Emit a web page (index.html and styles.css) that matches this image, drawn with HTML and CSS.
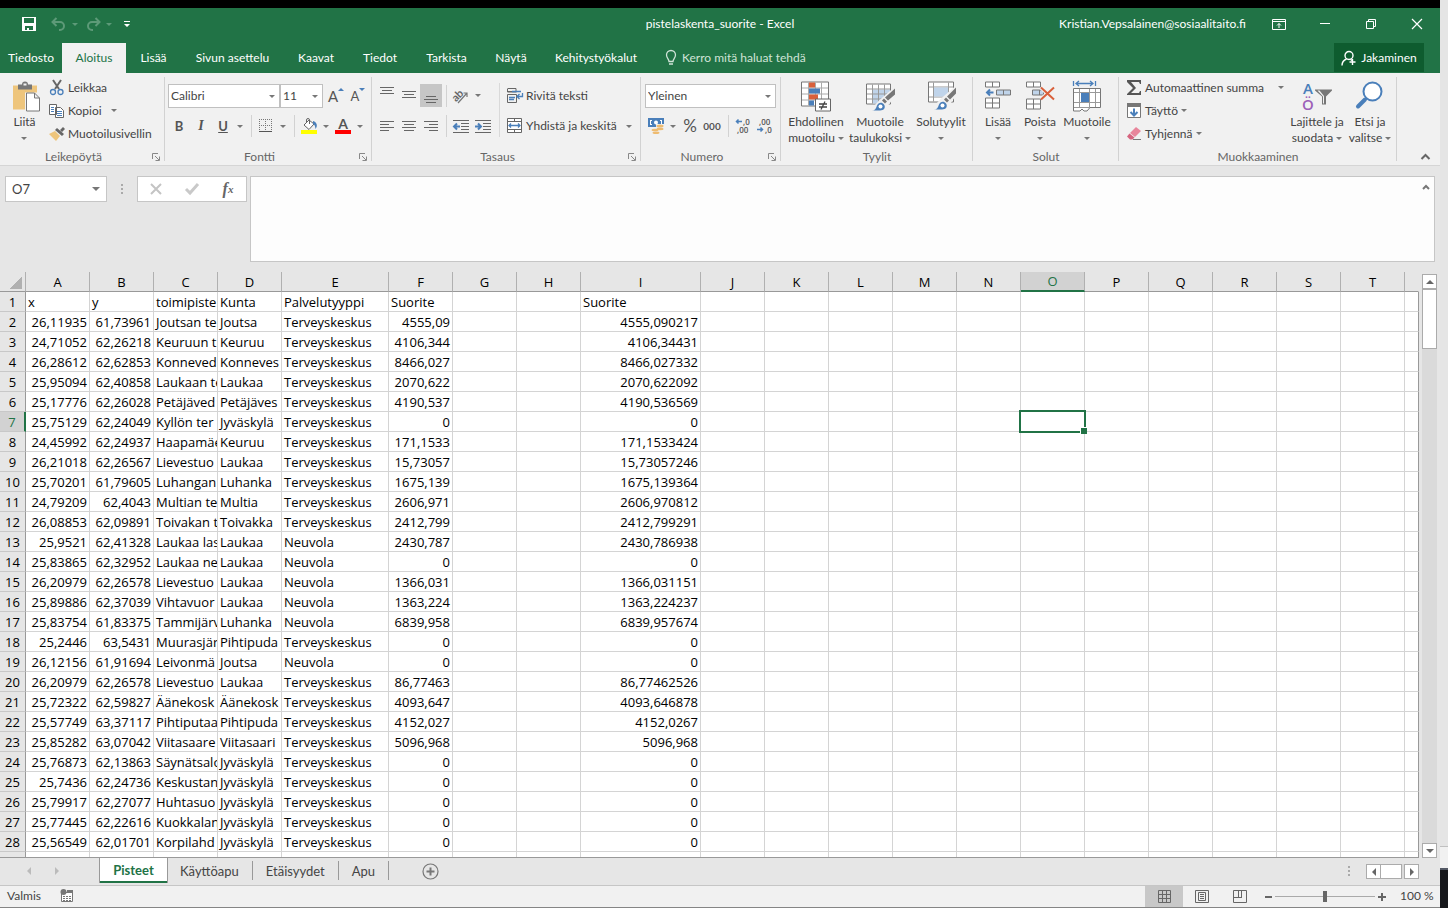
FILE: index.html
```
<!DOCTYPE html>
<html lang="fi">
<head>
<meta charset="utf-8">
<title>pistelaskenta_suorite - Excel</title>
<link rel="stylesheet" href="styles.css">
</head>
<body>
<div class="screen">
<div class="app">
  <header class="titlebar">
    <div class="quick">
      <button class="q-save" aria-label="Tallenna"><svg width="14" height="14" viewBox="0 0 14 14" shape-rendering="crispEdges"><path fill="#fff" fill-rule="evenodd" d="M0 0h14v14H0zM2 1v5h10V1zM3 9v4h2v-2h2v2h4V9z"/></svg></button>
      <button class="q-undo dim" aria-label="Kumoa"><svg width="15" height="14" viewBox="0 0 15 14" fill="none" stroke="#5d9a78" stroke-width="2"><path d="M5.500 1 1.500 5l4 4M2 5h7a4 4 0 0 1 0 8H8"/></svg></button><i class="dd faded"></i>
      <button class="q-redo dim" aria-label="Tee uudelleen"><svg width="15" height="14" viewBox="0 0 15 14" fill="none" stroke="#5d9a78" stroke-width="2"><path d="M9.500 1l4 4-4 4M13 5H6a4 4 0 0 0 0 8h1"/></svg></button><i class="dd faded"></i>
      <button class="q-more" aria-label="Mukauta"><svg width="7" height="7" viewBox="0 0 7 7"><path fill="#fff" d="M0 0h6v1H0zM0 3h6L3 6z"/></svg></button>
    </div>
    <div class="title">pistelaskenta_suorite - Excel</div>
    <div class="account">
      <span class="mail">Kristian.Vepsalainen@sosiaalitaito.fi</span>
      <button class="wbtn" aria-label="Valintanauhan asetukset"><svg width="14" height="11" viewBox="0 0 14 11" fill="none" stroke="#fff"><path d="M.5.5h13v10H.5zM.5 2.500h13M7 9V4.500M5 6.500l2-2 2 2"/></svg></button>
      <button class="wbtn" aria-label="Pienennä"><svg width="10" height="10" viewBox="0 0 10 10" stroke="#fff"><path d="M0 4.500h10"/></svg></button>
      <button class="wbtn" aria-label="Palauta"><svg width="10" height="10" viewBox="0 0 10 10" fill="none" stroke="#fff"><path d="M.5 2.500h7v7h-7zM2.500 2.500v-2h7v7h-2"/></svg></button>
      <button class="wbtn" aria-label="Sulje"><svg width="10" height="10" viewBox="0 0 10 10" stroke="#fff" stroke-width="1.200"><path d="M0 0l10 10M10 0 0 10"/></svg></button>
    </div>
  </header>
  <nav class="tabs">
    <button>Tiedosto</button><button class="on">Aloitus</button><button>Lisää</button><button>Sivun asettelu</button><button>Kaavat</button><button>Tiedot</button><button>Tarkista</button><button>Näytä</button><button>Kehitystyökalut</button>
    <button class="tell"><svg width="12" height="16" viewBox="0 0 12 16" fill="none" stroke="#cfe3d7" stroke-width="1.300"><path d="M4 11.500C4 9 1.500 8 1.500 5a4.500 4.500 0 0 1 9 0c0 3-2.500 4-2.500 6.500zM4 14h4"/></svg>Kerro mitä haluat tehdä</button>
    <button class="share"><svg width="16" height="16" viewBox="0 0 16 16" fill="none" stroke="#fff" stroke-width="1.400"><circle cx="8" cy="5.500" r="4"/><path d="M1 15.500c0-3 2-5.500 4.500-6.500M9.500 9.500l1.500 1M11.500 9v6M8.500 12h6"/></svg>Jakaminen</button>
  </nav>

  <section class="ribbon">
    <div class="group g-clip">
      <div class="body">
        <button class="big"><svg width="30" height="30" viewBox="0 0 30 30"><path fill="#eec57c" d="M3 4h24v24H3z"/><path fill="#777" d="M8 3h4a3 3 0 0 1 6 0h4v5H8z"/><path fill="#f1f1f1" d="M13.500 2h3v2h-3zM15 11h15v19H15z"/><path fill="#fff" stroke="#777" d="M16.500 11.500h8l5 5v13h-13zM24.500 11.500v5h5"/></svg><span>Liitä<br><i class="dd"></i></span></button>
        <div class="list">
          <button><svg width="16" height="16" viewBox="0 0 16 16" fill="none"><path stroke="#666" stroke-width="2" d="M4 0l6 9M12 0 6 9"/><circle cx="4" cy="12" r="2.500" stroke="#4a7fba" stroke-width="1.300"/><circle cx="11.500" cy="12" r="2.500" stroke="#4a7fba" stroke-width="1.300"/></svg>Leikkaa</button>
          <button><svg width="16" height="16" viewBox="0 0 16 16" fill="#fff" stroke="#666"><path d="M.5 1.500h7v10h-7zM6.500 4.500h5l3 3v7h-8z"/><path stroke="#4a7fba" d="M2 4.500h3M2 6.500h3M2 8.500h3M8 8.500h5M8 10.500h5M8 12.500h5"/></svg>Kopioi<i class="dd far"></i></button>
          <button><svg width="16" height="16" viewBox="0 0 16 16"><path fill="#eec57c" d="M0 8l6-3 5 5-4 5z"/><path fill="#666" d="M6 4l2-2 7 6-2 2zM11 4l3-3 2 2-3 3z"/></svg>Muotoilusivellin</button>
        </div>
      </div>
      <div class="cap"><span>Leikepöytä</span><button class="launch" aria-label="Leikepöydän asetukset"><svg width="8" height="8" viewBox="0 0 8 8" fill="none" stroke="#888"><path d="M.5 6V.5H6M3 3l4 4M7.500 3.500v4h-4"/></svg></button></div>
    </div>

    <div class="group g-font">
      <div class="body rows">
        <div class="row">
          <label class="sel w-font"><select aria-label="Fontti"><option>Calibri</option></select></label>
          <label class="sel w-size"><select aria-label="Fonttikoko"><option>11</option></select></label>
          <button class="ic grow" aria-label="Suurenna fonttia"><b>A</b><i class="tri-up"></i></button>
          <button class="ic shrink" aria-label="Pienennä fonttia"><b>A</b><i class="tri-dn"></i></button>
        </div>
        <div class="row">
          <button class="ic bold">B</button><button class="ic ital">I</button><button class="ic undl">U</button><button class="da" aria-label="Alleviivaus"><i class="dd"></i></button>
          <i class="sep"></i>
          <button class="ic" aria-label="Reunat"><svg width="14" height="14" viewBox="0 0 14 14" stroke="#777"><path stroke-dasharray="1 1" d="M0 .5h13M0 6.500h13M.5 0v13M6.500 0v13M12.500 0v13"/><path stroke="#555" d="M0 12.500h13"/></svg></button><button class="da" aria-label="Reunavalikko"><i class="dd"></i></button>
          <i class="sep"></i>
          <button class="ic" aria-label="Täyttöväri"><svg width="16" height="16" viewBox="0 0 16 16"><path fill="#ff0" d="M0 12h16v4H0z"/><path fill="#fff" stroke="#666" d="M3 7l5-5 5 4-5 5.500z"/><path fill="none" stroke="#666" d="M5.500 5V2a1.500 1.500 0 0 1 3 0v4"/><path fill="#4a7fba" d="M12 3c4 1 5 5 2.500 8C14 8 14 7 12 6z"/></svg></button><button class="da" aria-label="Täyttövärivalikko"><i class="dd"></i></button>
          <button class="ic" aria-label="Fontin väri"><svg width="16" height="16" viewBox="0 0 16 16"><path fill="red" d="M0 12h16v4H0z"/><text x="8" y="11" class="t-a">A</text></svg></button><button class="da" aria-label="Fonttivärivalikko"><i class="dd"></i></button>
        </div>
      </div>
      <div class="cap"><span>Fontti</span><button class="launch" aria-label="Fonttiasetukset"><svg width="8" height="8" viewBox="0 0 8 8" fill="none" stroke="#888"><path d="M.5 6V.5H6M3 3l4 4M7.500 3.500v4h-4"/></svg></button></div>
    </div>

    <div class="group g-align">
      <div class="body">
        <div class="rows left">
          <div class="row">
            <button class="ic" aria-label="Tasaa ylös"><svg width="14" height="21" viewBox="0 0 14 21" stroke="#666"><path d="M0 2.500h14M2 5.500h10M0 8.500h14"/></svg></button>
            <button class="ic" aria-label="Keskitä pystysuunnassa"><svg width="14" height="21" viewBox="0 0 14 21" stroke="#666"><path d="M0 6.500h14M2 9.500h10M0 12.500h14"/></svg></button>
            <button class="ic sel-on" aria-label="Tasaa alas"><svg width="14" height="21" viewBox="0 0 14 21" stroke="#666"><path d="M2 11.500h10M0 14.500h14M2 17.500h10"/></svg></button>
            <i class="sep"></i>
            <button class="ic" aria-label="Suunta"><svg width="18" height="18" viewBox="0 0 18 18"><text x="0" y="12" class="t-ab" transform="rotate(-45 6 9)">ab</text><path fill="none" stroke="#777" stroke-width="1.200" d="M6 16 15 6M11.500 6H15v4"/></svg></button><button class="da" aria-label="Suuntavalikko"><i class="dd"></i></button>
          </div>
          <div class="row">
            <button class="ic" aria-label="Tasaa vasemmalle"><svg width="14" height="13" viewBox="0 0 14 13" stroke="#666"><path d="M0 1.500h14M0 4.500h9M0 7.500h14M0 10.500h9"/></svg></button>
            <button class="ic" aria-label="Keskitä"><svg width="14" height="13" viewBox="0 0 14 13" stroke="#666"><path d="M0 1.500h14M2 4.500h10M0 7.500h14M2 10.500h10"/></svg></button>
            <button class="ic" aria-label="Tasaa oikealle"><svg width="14" height="13" viewBox="0 0 14 13" stroke="#666"><path d="M0 1.500h14M5 4.500h9M0 7.500h14M5 10.500h9"/></svg></button>
            <i class="sep"></i>
            <button class="ic" aria-label="Pienennä sisennystä"><svg width="16" height="13" viewBox="0 0 16 13" stroke="#666"><path d="M0 .5h16M8 3.500h8M8 6.500h8M8 9.500h8M0 12.500h16"/><path fill="none" stroke="#4a7fba" stroke-width="2" d="M7 6.500H1.500M4 3.500l-3 3 3 3"/></svg></button>
            <button class="ic" aria-label="Suurenna sisennystä"><svg width="16" height="13" viewBox="0 0 16 13" stroke="#666"><path d="M0 .5h16M8 3.500h8M8 6.500h8M8 9.500h8M0 12.500h16"/><path fill="none" stroke="#4a7fba" stroke-width="2" d="M0 6.500h5.500M3 3.500l3 3-3 3"/></svg></button>
          </div>
        </div>
        <div class="rows right">
          <button class="row txt"><svg width="16" height="16" viewBox="0 0 16 16" fill="none" stroke="#666"><path d="M.5 1v3h9M.5.500H9v3H.500M.500 6.500h9v8h-9z"/><path stroke="#4a7fba" stroke-width="1.300" d="M2 9.500h6M2 11.500h5M5 3.500h9M15.500 5v3.500H10M12.500 6 10 8.500l2.500 2.500"/></svg>Rivitä teksti</button>
          <button class="row txt"><svg width="16" height="16" viewBox="0 0 16 16" fill="none" stroke="#666"><path fill="#fff" d="M.5.500h14v14H.500z"/><path d="M.5 3.500h14M.5 11.500h14M7.500.500v3M7.500 11.500v3"/><path stroke="#4a7fba" stroke-width="1.300" d="M2 7.500h11M4 5.500l-2 2 2 2M11 5.500l2 2-2 2"/></svg>Yhdistä ja keskitä<i class="dd far"></i></button>
        </div>
      </div>
      <div class="cap"><span>Tasaus</span><button class="launch" aria-label="Tasausasetukset"><svg width="8" height="8" viewBox="0 0 8 8" fill="none" stroke="#888"><path d="M.5 6V.5H6M3 3l4 4M7.500 3.500v4h-4"/></svg></button></div>
    </div>

    <div class="group g-num">
      <div class="body rows">
        <div class="row"><label class="sel w-num"><select aria-label="Lukumuoto"><option>Yleinen</option></select></label></div>
        <div class="row">
          <button class="ic" aria-label="Valuutta"><svg width="16" height="16" viewBox="0 0 16 16"><path fill="#4a7fba" d="M0 0h16v9H0z"/><path fill="#fff" d="M2 2h2v1H3v3h1v1H2zM12 2h2v5h-2V6h1V3h-1z"/><circle cx="8" cy="4.500" r="2" fill="#fff"/><path fill="#f1f1f1" d="M3 9h5V6h8v10H3z"/><g fill="#eebb70"><ellipse cx="12" cy="8" rx="3.500" ry="1.500"/><ellipse cx="12" cy="11" rx="3.500" ry="1.200"/><ellipse cx="7" cy="12" rx="3.500" ry="1.200"/><ellipse cx="8" cy="14.800" rx="3.500" ry="1.200"/></g></svg></button><button class="da" aria-label="Valuuttavalikko"><i class="dd"></i></button>
          <button class="ic pct">%</button><button class="ic tho">000</button>
          <i class="sep"></i>
          <button class="ic" aria-label="Lisää desimaaleja"><svg width="16" height="16" viewBox="0 0 16 16"><text x="8" y="7" class="t-d">,0</text><text x="2" y="15" class="t-d">,00</text><path fill="none" stroke="#4a7fba" stroke-width="1.500" d="M7 3.500H1.500M3.500 1.500l-2 2 2 2"/></svg></button>
          <button class="ic" aria-label="Vähennä desimaaleja"><svg width="16" height="16" viewBox="0 0 16 16"><text x="2" y="7" class="t-d">,00</text><text x="8" y="15" class="t-d">,0</text><path fill="none" stroke="#4a7fba" stroke-width="1.500" d="M0 11.500h5.500M3.500 9.500l2 2-2 2"/></svg></button>
        </div>
      </div>
      <div class="cap"><span>Numero</span><button class="launch" aria-label="Numeroasetukset"><svg width="8" height="8" viewBox="0 0 8 8" fill="none" stroke="#888"><path d="M.5 6V.5H6M3 3l4 4M7.500 3.500v4h-4"/></svg></button></div>
    </div>

    <div class="group g-style">
      <div class="body">
        <button class="big"><svg width="30" height="30" viewBox="0 0 30 30"><path fill="#fff" stroke="#777" d="M.5.500h27v24H.500z"/><path stroke="#aaa" d="M7.500 1v23M14.500 1v23M20.500 1v23M1 6.500h26M1 12.500h26M1 18.500h26"/><path fill="#d9603b" d="M8 1h6v5H8zM8 13h9v5H8z"/><path fill="#4a7fba" d="M8 7h11v5H8zM8 19h5v5H8z"/><path fill="#fff" stroke="#666" d="M14.500 17.500h15v12h-15z"/><path stroke="#444" stroke-width="1.300" d="M18 22.500h8M18 25.500h8M24 20l-4 8"/></svg><span>Ehdollinen<br>muotoilu<i class="dd in"></i></span></button>
        <button class="big"><svg width="30" height="30" viewBox="0 0 30 30"><path fill="#fff" stroke="#777" d="M1.500 2.500h24v20h-24z"/><path fill="#c0d4ea" d="M8 8h17v14H8z"/><path stroke="#999" d="M7.500 3v19M13.500 3v19M19.500 3v19M2 7.500h23M2 12.500h23M2 17.500h23"/><path fill="#f1f1f1" d="M30 5v10L20 28H6l8-9z"/><path fill="#777" d="M30 7v6l-7 6-3-3zM19 17l3 3-2 2-3-3z"/><path fill="#4a7fba" d="M7 29c3 0 4-2 5-5 1-3 5-4 7-1s0 6-4 6z"/><circle cx="15.500" cy="25" r="2" fill="#fff"/></svg><span>Muotoile<br>taulukoksi<i class="dd in"></i></span></button>
        <button class="big"><svg width="30" height="30" viewBox="0 0 30 30"><path fill="#fff" stroke="#777" d="M2.500.500h25v20h-25z"/><path stroke="#999" d="M7.500 1v19M22.500 1v19M3 5.500h24M3 15.500h24"/><path fill="#c0d4ea" d="M8 6h14v9H8z"/><path fill="#f1f1f1" d="M30 4v10L21 27H6l8-9z"/><path fill="#777" d="M30 6v6l-6 6-3-3zM20 16l3 3-2 2-3-3z"/><path fill="#4a7fba" d="M8 28c3 0 4-2 5-5 1-3 5-4 7-1s0 6-4 6z"/><circle cx="16.500" cy="24" r="2" fill="#fff"/></svg><span>Solutyylit<br><i class="dd"></i></span></button>
      </div>
      <div class="cap"><span>Tyylit</span></div>
    </div>

    <div class="group g-cells">
      <div class="body">
        <button class="big"><svg width="28" height="30" viewBox="0 0 28 30" fill="#fff" stroke="#777"><path d="M1.500.500h14v5h-14zM8.500.500v5M1.500 16.500h14v10h-14zM8.500 16.500v10M1.500 21.500h14"/><path fill="#c0d4ea" d="M12.500 8.500h14v5h-14zM19.500 8.500v5"/><path fill="none" stroke="#4a7fba" stroke-width="2" d="M9.500 11H3M6 8l-3 3 3 3"/></svg><span>Lisää<br><i class="dd"></i></span></button>
        <button class="big"><svg width="30" height="30" viewBox="0 0 30 30" fill="#fff" stroke="#777"><path d="M1.500.500h14v5h-14zM8.500.500v5M1.500 17.500h14v10h-14zM8.500 17.500v10M1.500 22.500h14"/><path fill="#c0d4ea" d="M7.500 8.500h11v5h-11zM14.500 8.500v5"/><path fill="none" stroke="#f1f1f1" stroke-width="4" d="M16 6l13 12M29 6 16 18"/><path fill="none" stroke="#d9603b" stroke-width="2" d="M16 6l13 12M29 6 16 18"/></svg><span>Poista<br><i class="dd"></i></span></button>
        <button class="big"><svg width="28" height="31" viewBox="0 0 28 31"><path fill="none" stroke="#4a7fba" stroke-width="1.300" d="M.5 0v5M22.500 0v5M3 2.500h17M6 0 3 2.500 6 5M17 0l3 2.500L17 5"/><path fill="#fff" stroke="#777" d="M.5 7.500h27v19H17l-3 3.500h-3l-2-2-2 2H.500z"/><path stroke="#999" d="M6.500 8v18M16.500 8v18M22.500 8v18M1 11.500h26M1 21.500h26M1 26.500h16"/><path fill="#4a7fba" d="M8 12h8v9H8z"/></svg><span>Muotoile<br><i class="dd"></i></span></button>
      </div>
      <div class="cap"><span>Solut</span></div>
    </div>

    <div class="group g-edit">
      <div class="body">
        <div class="list">
          <button><svg width="16" height="16" viewBox="0 0 16 16"><path fill="#555" d="M1 0h14v4h-1l-1-2H5l5 6-5 5h8l1-2h1v4H1v-1l6-6-6-6z"/></svg>Automaattinen summa<i class="dd far"></i></button>
          <button><svg width="16" height="16" viewBox="0 0 16 16"><path fill="#fff" stroke="#777" d="M1.500.500h13v14h-13z"/><path fill="#777" d="M1 0h14v4H1z"/><path fill="none" stroke="#4a7fba" stroke-width="2" d="M8 5.500V12M4.500 9 8 12.500 11.500 9"/></svg>Täyttö<i class="dd in"></i></button>
          <button><svg width="16" height="16" viewBox="0 0 16 16"><path fill="#e8859b" d="M10 1l5 4-6 6-5-4z"/><path fill="#d6647f" d="M3.500 7.500l5 4-2 2H4l-3-3z"/><path stroke="#777" d="M7 13.500h8"/></svg>Tyhjennä<i class="dd in"></i></button>
        </div>
        <button class="big"><svg width="30" height="30" viewBox="0 0 30 30"><text x="6" y="12" class="t-s1">A</text><text x="6" y="28" class="t-s2">Ö</text><path fill="#777" d="M13 8h17v1l-6 6v8h-4v-8l-7-6z"/><path fill="#f1f1f1" d="M15.500 9h2l4.500 5.500V22h-1v-7z"/></svg><span>Lajittele ja<br>suodata<i class="dd in"></i></span></button>
        <button class="big"><svg width="30" height="30" viewBox="0 0 30 30"><path stroke="#4a7fba" stroke-width="4" stroke-linecap="round" d="M3 25l7-7"/><circle cx="17.500" cy="10" r="9" fill="#fff" stroke="#4a7fba" stroke-width="2"/></svg><span>Etsi ja<br>valitse<i class="dd in"></i></span></button>
      </div>
      <div class="cap"><span>Muokkaaminen</span></div>
    </div>
    <button class="collapse" aria-label="Kutista valintanauha"><svg width="9" height="6" viewBox="0 0 9 6" fill="none" stroke="#666" stroke-width="2"><path d="M.5 5l4-4 4 4"/></svg></button>
  </section>

  <section class="formula">
    <div class="namebox"><input value="O7" aria-label="Nimiruutu"><i class="dd large"></i></div>
    <i class="grip"></i>
    <div class="fx">
      <button aria-label="Peruuta"><svg width="12" height="12" viewBox="0 0 12 12" stroke="#c4c4c4" stroke-width="2"><path d="M1 1l10 10M11 1 1 11"/></svg></button>
      <button aria-label="Hyväksy"><svg width="14" height="12" viewBox="0 0 14 12" fill="none" stroke="#c9c9c9" stroke-width="3"><path d="M1 6l4 4 8-9"/></svg></button>
      <button class="f" aria-label="Lisää funktio">f<sub>x</sub></button>
    </div>
    <div class="fbox"><textarea aria-label="Kaavarivi"></textarea><button aria-label="Kutista kaavarivi"><svg width="8" height="6" viewBox="0 0 8 6" fill="none" stroke="#777" stroke-width="2"><path d="M1 5l3-3 3 3"/></svg></button></div>
  </section>

  <main class="work">
    <div class="sheet"><table id="grid"></table></div>
    <div class="vscroll"><button aria-label="Ylös"><i class="up"></i></button><div class="track"><div class="thumb"></div></div><button aria-label="Alas"><i class="dn"></i></button></div>
  </main>

  <footer class="sheets">
    <div class="nav"><button aria-label="Edellinen"><i class="lt"></i></button><button aria-label="Seuraava"><i class="rt"></i></button></div>
    <button class="st on">Pisteet</button><button class="st">Käyttöapu</button><button class="st">Etäisyydet</button><button class="st">Apu</button>
    <button class="add" aria-label="Uusi taulukko"><svg width="17" height="17" viewBox="0 0 17 17" fill="none" stroke="#777"><circle cx="8.500" cy="8.500" r="7.500" stroke-width="1.200"/><path stroke-width="2" d="M8.500 4.500v8M4.500 8.500h8"/></svg></button>
    <i class="grip"></i>
    <div class="hscroll"><button aria-label="Vasemmalle"><i class="lt"></i></button><div class="hthumb"></div><button class="last" aria-label="Oikealle"><i class="rt"></i></button></div>
  </footer>

  <div class="status">
    <span class="ready">Valmis</span>
    <button class="macro" aria-label="Makrot"><svg width="14" height="14" viewBox="0 0 14 14"><path fill="#fff" stroke="#777" d="M1.500 3.500h11v9h-11z"/><path fill="#777" d="M7 1h6v3H7z"/><circle cx="3.500" cy="3" r="3" fill="#777"/><path stroke="#777" stroke-dasharray="2 1" d="M3 7.500h8M3 9.500h8M3 11.500h8"/></svg></button>
    <div class="views">
      <button class="on" aria-label="Normaali"><svg width="13" height="13" viewBox="0 0 13 13" fill="none" stroke="#666"><path d="M.5.500h12v12H.500zM4.500 0v13M8.500 0v13M0 4.500h13M0 8.500h13"/></svg></button>
      <button aria-label="Sivun asettelu"><svg width="14" height="13" viewBox="0 0 14 13" fill="none" stroke="#666"><path d="M.5.500h13v12H.500zM3.500 2.500h7v8h-7zM5 4.500h4M5 6.500h4M5 8.500h4"/></svg></button>
      <button aria-label="Sivunvaihdot"><svg width="14" height="13" viewBox="0 0 14 13" fill="none" stroke="#666"><path d="M.5.500h13v12H.500zM5.500 0v7.500M8.500 0v7.500M0 7.500h9"/></svg></button>
    </div>
    <button class="zb" aria-label="Loitonna"><svg width="9" height="9" viewBox="0 0 9 9"><path stroke="#666" stroke-width="2" d="M1 5h7"/></svg></button>
    <input class="zoom" type="range" min="0" max="200" value="100" aria-label="Zoomaus">
    <button class="zb" aria-label="Lähennä"><svg width="9" height="9" viewBox="0 0 9 9"><path stroke="#666" stroke-width="2" d="M0 5h8M4 1v8"/></svg></button>
    <span class="pct-zoom">100 %</span>
  </div>
</div>
<aside class="behind"><div class="pane"></div><div class="dark"></div></aside>
</div>
<script src="grid.js"></script>
</body>
</html>
```
FILE: styles.css
```
* { box-sizing: border-box; }
body { margin: 0; font: 12px/16px Lato, "Open Sans", sans-serif; color: #444; background: #e5e5e5; }
button, input, select, textarea { font: inherit; color: inherit; margin: 0; padding: 0; border: 0; background: none; }
button { display: flex; align-items: center; justify-content: center; white-space: nowrap; }
svg { display: block; flex: none; overflow: visible; }
.screen { display: flex; height: 100vh; }
.app { flex: 1; min-width: 0; display: flex; flex-direction: column; border-top: 8px solid #000; border-bottom: 1px solid #858585; background: #e6e6e6; }
.behind { width: 8px; display: flex; flex-direction: column; background: #e5e5e5; justify-content: flex-end; }
.pane { height: 22px; background: #f1f1f1; border-top: 1px solid #c0c0c0; }
.dark { height: 40px; background: #17181c; border-top: 2px solid #555a66; }

.dd { display: inline-block; flex: none; width: 0; border: 3px solid transparent; border-top-color: #777; border-bottom: 0; vertical-align: middle; }
.dd.in { margin-left: 3px; }
.dd.far { margin-left: auto; }
.dd.large { border-width: 4px 4px 0; }
.dd.faded { border-top-color: #5d9a78; }

.titlebar { display: grid; grid-template-columns: 1fr auto 1fr; align-items: center; height: 35px; padding-bottom: 3px; background: #217346; color: #fff; }
.quick { display: flex; align-items: center; padding-left: 22px; }
.q-undo { margin: 0 6px 0 15px; }
.q-redo { margin: 0 5px 0 8px; }
.q-more { margin-left: 12px; }
.account { display: flex; align-items: center; justify-content: flex-end; }
.mail { margin-right: 10px; }
.wbtn { width: 46px; height: 28px; }

.tabs { display: grid; grid-template-columns: 62px 64px 55px 103px 64px 64px 69px 60px 110px auto 1fr; height: 30px; background: #217346; color: #fff; }
.tabs .on { background: #f1f1f1; color: #217346; }
.tabs .tell { padding-left: 14px; gap: 5px; color: #cfe3d7; }
.tabs .share { justify-self: end; width: 90px; height: 29px; margin-right: 16px; gap: 4px; background: #0e5c2f; }

.ribbon { display: flex; height: 93px; background: #f1f1f1; border-bottom: 1px solid #d5d5d5; }
.group { flex: none; display: flex; flex-direction: column; background: linear-gradient(#d2d2d2, #d2d2d2) right center / 1px 84px no-repeat; }
.g-clip { width: 165px; }
.g-font { width: 207px; }
.g-align { width: 269px; }
.g-num { width: 140px; }
.g-style { width: 192px; }
.g-cells { width: 146px; }
.g-edit { width: 278px; }
.body { display: flex; height: 76px; }
.cap { display: flex; height: 16px; color: #666; text-align: center; }
.cap span { flex: 1; }
.launch { width: 18px; }
.big { flex-direction: column; justify-content: flex-start; padding-top: 8px; text-align: center; }
.big svg { height: 31px; margin-bottom: 2px; }
.list { display: grid; grid-auto-rows: 23px; padding-top: 3px; align-content: start; }
.list button, .txt { justify-content: flex-start; }
.list svg, .txt svg { margin-right: 3px; }
.g-clip .big { width: 49px; }
.g-clip .dd.far { margin-left: 9px; }
.rows { display: flex; flex-direction: column; gap: 8px; padding-top: 11px; }
.row { display: flex; align-items: center; height: 23px; }
.rows .row + .row { height: 22px; }
.g-font .rows { padding-left: 3px; }
.g-num .rows { padding-left: 4px; }
.sel { position: relative; height: 24px; border: 1px solid #c0c0c0; background: #fff; }
.sel select { width: 100%; height: 22px; padding-left: 2px; appearance: none; }
.sel::after { content: ""; position: absolute; right: 4px; top: 10px; border: 3px solid transparent; border-top-color: #777; border-bottom: 0; }
.w-font { width: 112px; }
.w-size { width: 43px; }
.w-num { width: 131px; }
.ic { width: 22px; height: 23px; color: #555; font-weight: 700; }
.sel-on { background: #c6c6c6; }
.da { width: 12px; height: 23px; }
.sep { width: 1px; height: 22px; margin: 0 3px 0 5px; background: #d2d2d2; }
.bold, .undl { font-size: 13px; }
.ital { font: italic 700 14px/16px "Liberation Serif", serif; }
.undl { text-decoration: underline; }
.grow { margin-left: 2px; font-size: 15px; }
.shrink { font-size: 13px; }
.grow b, .shrink b { font-weight: 400; }
.tri-up, .tri-dn { align-self: flex-start; margin-top: 4px; border: 3px solid transparent; }
.tri-up { border-bottom-color: #4a7fba; border-top: 0; }
.tri-dn { border-top-color: #4a7fba; border-bottom: 0; }
.t-a { font: 700 14px Lato, sans-serif; fill: #555; text-anchor: middle; }
.t-ab { font: 700 11px Lato, sans-serif; fill: #666; }
.t-d { font: 600 8px "Open Sans", sans-serif; fill: #555; }
.t-s1 { font: 600 15px "Open Sans", sans-serif; fill: #4a7fba; text-anchor: middle; }
.t-s2 { font: 600 15px "Open Sans", sans-serif; fill: #9c5fb8; text-anchor: middle; }
.left { width: 128px; padding-left: 4px; background: linear-gradient(#d9d9d9, #d9d9d9) right 10px / 1px 54px no-repeat; }
.left .sep { margin-left: 4px; }
.right { flex: 1; padding: 11px 9px 0 7px; }
.pct { font-size: 17px; font-weight: 400; }
.tho { font-size: 10px; }
.g-style .body, .g-cells .body { padding-left: 4px; display: grid; }
.g-style .body { grid-template-columns: 62px 66px 56px; }
.g-cells .body { grid-template-columns: 42px 42px 52px; }
.g-edit .body { display: grid; grid-template-columns: 158px 66px 40px; padding-left: 7px; }
.g-edit .list { width: 158px; }
.collapse { margin-left: auto; width: 30px; height: 16px; align-self: flex-end; }

.formula { display: flex; align-items: flex-start; padding: 10px 5px 10px; }
.namebox { display: flex; align-items: center; width: 102px; height: 26px; padding-right: 6px; border: 1px solid #c6c6c6; background: #fff; }
.namebox input { flex: 1; min-width: 0; padding-left: 6px; font-size: 13px; }
.grip { width: 2px; height: 10px; margin: 8px 14px 0; background: repeating-linear-gradient(#aaa 0 2px, transparent 2px 4px); }
.fx { display: flex; width: 110px; height: 26px; margin-right: 3px; border: 1px solid #c6c6c6; background: #fff; }
.fx button { flex: 1; }
.fx .f { font: italic 700 16px/20px "Liberation Serif", serif; color: #666; }
.fx sub { font-size: 11px; line-height: 8px; }
.fbox { flex: 1; display: flex; align-items: flex-start; height: 86px; border: 1px solid #c6c6c6; background: #fdfdfd; }
.fbox textarea { flex: 1; height: 84px; resize: none; }
.fbox button { width: 16px; height: 20px; }

.work { flex: 1; min-height: 0; display: flex; }
.sheet { flex: 1; min-width: 0; overflow: hidden; border-bottom: 1px solid #999; }
#grid { width: 100%; table-layout: fixed; border-collapse: separate; border-spacing: 0; font: 13px/18px "Open Sans", sans-serif; color: #000; }
#grid td { height: 20px; padding: 0 0 0 2px; border: solid #d4d4d4; border-width: 0 1px 1px 0; background: #fff; white-space: nowrap; overflow: hidden; }
#grid .n { text-align: right; padding: 0 2px 0 0; }
#grid th { height: 20px; padding: 0; font-weight: 400; text-align: center; background: #e6e6e6; border-right: 1px solid #a0a0a0; }
#grid thead th { border-bottom: 1px solid #999; border-right-color: #b0b0b0; }
#grid tbody th { border-bottom: 1px solid #c8c8c8; border-right-color: #999; }
#grid .edge { border-right-color: #999; }
#grid thead .edge { border-right-color: transparent; }
#grid thead .cur { background: #d2d2d2; color: #217346; border-bottom: 2px solid #217346; }
#grid tbody .cur { background: #d2d2d2; color: #217346; border-right: 2px solid #217346; }
#grid .picked { position: relative; overflow: visible; }
.marker { position: absolute; inset: -2px -2px -2px -2px; border: 2px solid #217346; }
.marker::after { content: ""; position: absolute; right: -3px; bottom: -3px; width: 6px; height: 6px; background: #217346; border: solid #fff; border-width: 1px 0 0 1px; }
.corner { display: block; width: 12px; height: 12px; margin: 3px 0 0 10px; background: linear-gradient(135deg, transparent 50%, #b0b0b0 50%); }

.vscroll { width: 21px; display: flex; flex-direction: column; padding: 2px 3px 0; }
.vscroll button { flex: none; height: 15px; border: 1px solid #ababab; background: #fff; }
.track { flex: 1; background: #dadada; }
.thumb { height: 60px; border: 1px solid #ababab; background: #fff; }
.up, .dn, .lt, .rt { border: 4px solid transparent; }
.up { border-bottom-color: #666; border-top: 0; }
.dn { border-top-color: #666; border-bottom: 0; }
.lt { border-right-color: #666; border-left: 0; }
.rt { border-left-color: #666; border-right: 0; }

.sheets { display: flex; height: 28px; border-bottom: 1px solid #c6c6c6; font-size: 13px; }
.nav { display: flex; width: 100px; height: 26px; padding-left: 15px; }
.nav button { width: 28px; }
.nav .lt { border-right-color: #bbb; }
.nav .rt { border-left-color: #bbb; }
.st { height: 25px; padding: 0 14px 0 13px; background: linear-gradient(#999, #999) right 3px / 1px 19px no-repeat; }
.st.on { height: 25px; width: 67px; padding: 1px 0 0; background: #fff; border-bottom: 2px solid #217346; color: #217346; font-weight: 700; box-shadow: -1px 0 #999, 1px 0 #999; }
.add { margin-left: 33px; height: 26px; }
.sheets .grip { margin: 8px 16px 0 auto; }
.hscroll { display: flex; height: 15px; margin: 6px 21px 0 0; background: #dadada; }
.hscroll button { width: 15px; border: 1px solid #ababab; background: #fff; }
.hthumb { width: 21px; border: 1px solid #ababab; border-left: 0; background: #fff; }
.hscroll .last { margin-left: 2px; }

.status { display: flex; align-items: center; height: 21px; padding-bottom: 1px; background: #f1f1f1; }
.ready { padding-left: 7px; width: 60px; }
.views { display: flex; margin-left: auto; margin-right: 2px; }
.views button { width: 38px; height: 21px; }
.views .on { background: #c8c8c8; }
.zb { width: 14px; height: 21px; }
.zoom { width: 100px; height: 21px; appearance: none; background: linear-gradient(#aaa, #aaa) center / 100% 1px no-repeat; }
.zoom::-webkit-slider-thumb { appearance: none; width: 4px; height: 11px; background: #666; }
.pct-zoom { width: 51px; padding-left: 11px; white-space: nowrap; }
```
FILE: grid.js
```
const widths = { E: 107, I: 120 };
const letters = 'ABCDEFGHIJKLMNOPQRST'.split('');
const T = 'Terveyskeskus', N = 'Neuvola';
const rows = [
  ['x', 'y', 'toimipiste', 'Kunta', 'Palvelutyyppi', 'Suorite', 'Suorite'],
  ['26,11935', '61,73961', 'Joutsan te', 'Joutsa', T, '4555,09', '4555,090217'],
  ['24,71052', '62,26218', 'Keuruun t', 'Keuruu', T, '4106,344', '4106,34431'],
  ['26,28612', '62,62853', 'Konneved', 'Konneves', T, '8466,027', '8466,027332'],
  ['25,95094', '62,40858', 'Laukaan te', 'Laukaa', T, '2070,622', '2070,622092'],
  ['25,17776', '62,26028', 'Petäjäved', 'Petäjäves', T, '4190,537', '4190,536569'],
  ['25,75129', '62,24049', 'Kyllön ter', 'Jyväskylä', T, '0', '0'],
  ['24,45992', '62,24937', 'Haapamäe', 'Keuruu', T, '171,1533', '171,1533424'],
  ['26,21018', '62,26567', 'Lievestuo', 'Laukaa', T, '15,73057', '15,73057246'],
  ['25,70201', '61,79605', 'Luhangan', 'Luhanka', T, '1675,139', '1675,139364'],
  ['24,79209', '62,4043', 'Multian te', 'Multia', T, '2606,971', '2606,970812'],
  ['26,08853', '62,09891', 'Toivakan t', 'Toivakka', T, '2412,799', '2412,799291'],
  ['25,9521', '62,41328', 'Laukaa las', 'Laukaa', N, '2430,787', '2430,786938'],
  ['25,83865', '62,32952', 'Laukaa ne', 'Laukaa', N, '0', '0'],
  ['26,20979', '62,26578', 'Lievestuo', 'Laukaa', N, '1366,031', '1366,031151'],
  ['25,89886', '62,37039', 'Vihtavuor', 'Laukaa', N, '1363,224', '1363,224237'],
  ['25,83754', '61,83375', 'Tammijärv', 'Luhanka', N, '6839,958', '6839,957674'],
  ['25,2446', '63,5431', 'Muurasjär', 'Pihtipuda', T, '0', '0'],
  ['26,12156', '61,91694', 'Leivonmä', 'Joutsa', N, '0', '0'],
  ['26,20979', '62,26578', 'Lievestuo', 'Laukaa', T, '86,77463', '86,77462526'],
  ['25,72322', '62,59827', 'Äänekosk', 'Äänekosk', T, '4093,647', '4093,646878'],
  ['25,57749', '63,37117', 'Pihtiputaa', 'Pihtipuda', T, '4152,027', '4152,0267'],
  ['25,85282', '63,07042', 'Viitasaare', 'Viitasaari', T, '5096,968', '5096,968'],
  ['25,76873', '62,13863', 'Säynätsalo', 'Jyväskylä', T, '0', '0'],
  ['25,7436', '62,24736', 'Keskustan', 'Jyväskylä', T, '0', '0'],
  ['25,79917', '62,27077', 'Huhtasuo', 'Jyväskylä', T, '0', '0'],
  ['25,77445', '62,22616', 'Kuokkalan', 'Jyväskylä', T, '0', '0'],
  ['25,56549', '62,01701', 'Korpilahd', 'Jyväskylä', T, '0', '0'],
];
const place = { A: 0, B: 1, C: 2, D: 3, E: 4, F: 5, I: 6 };

let html = '<colgroup><col style="width:26px">';
html += letters.map(l => `<col style="width:${widths[l] || 64}px">`).join('') + '<col></colgroup>';
html += '<thead><tr><th><i class="corner"></i></th>';
html += letters.map(l => `<th${l === 'O' ? ' class="cur"' : ''}>${l}</th>`).join('') + '<th class="edge"></th></tr></thead><tbody>';
for (let r = 0; r <= rows.length; r++) {
  const data = rows[r] || [];
  html += `<tr><th${r === 6 ? ' class="cur"' : ''}>${data.length ? r + 1 : ''}</th>`;
  for (const l of letters) {
    const text = data[place[l]] || '';
    if (r === 6 && l === 'O') html += '<td class="picked"><div class="marker"></div></td>';
    else html += `<td${/^\d/.test(text) ? ' class="n"' : ''}>${text}</td>`;
  }
  html += '<td class="edge"></td></tr>';
}
document.getElementById('grid').innerHTML = html + '</tbody>';
```
